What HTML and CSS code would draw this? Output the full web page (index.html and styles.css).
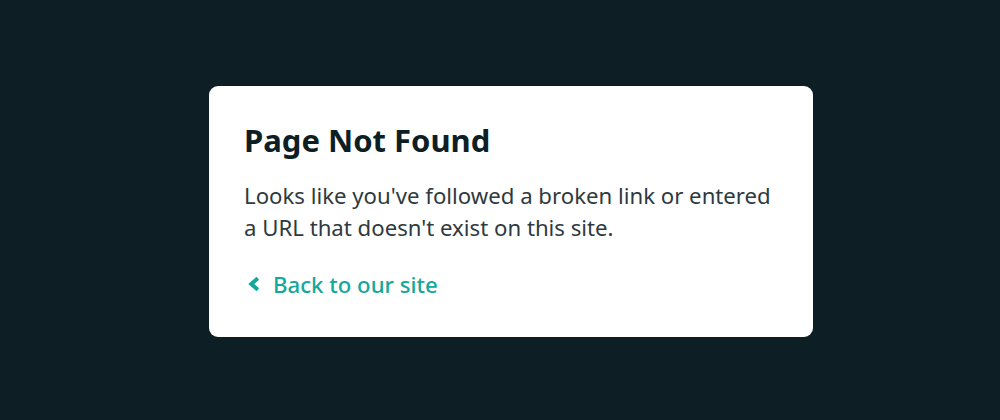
FILE: index.html
```html
<!DOCTYPE html>
<html lang="en">
<head>
<meta charset="utf-8">
<title>Page Not Found</title>
<link rel="stylesheet" href="styles.css">
</head>
<body>
<div class="page">
  <div class="card">
    <h1 class="title">Page Not Found</h1>
    <p class="text">Looks like you've followed a broken link or entered a URL that doesn't exist on this site.</p>
    <a class="back" href="#"><svg class="chev" viewBox="0 0 13 14" width="13" height="14" aria-hidden="true"><path d="M10.8 1.2 L4.3 7 L10.8 12.8" fill="none" stroke="currentColor" stroke-width="4" stroke-linecap="butt" stroke-linejoin="miter"/></svg><span>Back to our site</span></a>
  </div>
</div>
</body>
</html>
```
FILE: styles.css
```css
html, body {
  margin: 0;
  padding: 0;
  background: #0e1e25;
}
body {
  font-family: "Noto Sans", "Open Sans", sans-serif;
  color: #0e1e25;
}
.page {
  height: 420px;
  display: flex;
  align-items: center;
  justify-content: center;
  padding-left: 22px;
  padding-top: 2px;
  box-sizing: border-box;
}
.card {
  width: 604px;
  height: 251px;
  box-sizing: border-box;
  background: #ffffff;
  border-radius: 9px;
  padding: 32px 35px;
}
.title {
  margin: 0;
  font-size: 31px;
  line-height: 44px;
  font-weight: 700;
}
.text {
  margin: 18px 0 0;
  font-size: 22.2px;
  line-height: 32px;
  color: #2e3a40;
}
.back {
  display: inline-flex;
  align-items: center;
  gap: 13px;
  margin-top: 25px;
  padding-left: 3px;
  color: #12a89b;
  text-decoration: none;
  font-size: 22.2px;
  font-weight: 500;
}
.chev { display: block; }
```
